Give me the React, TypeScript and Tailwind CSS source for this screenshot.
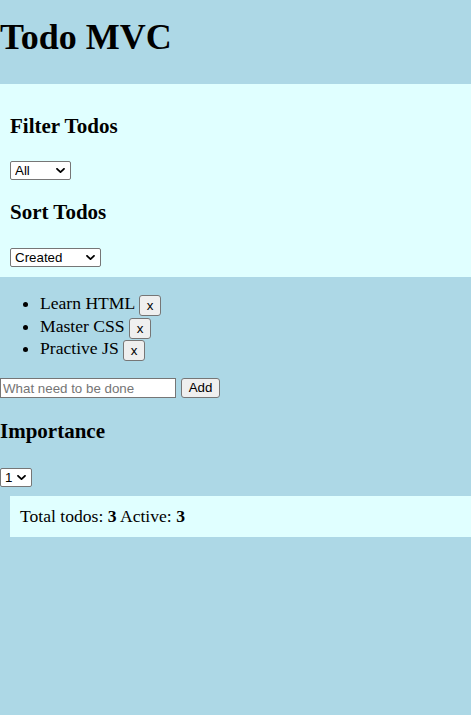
import { useState } from 'react'

type Todo = { id: number; title: string; importance: number; done: boolean }

const initialTodos: Todo[] = [
  { id: 1, title: 'Learn HTML', importance: 1, done: false },
  { id: 2, title: 'Master CSS', importance: 1, done: false },
  { id: 3, title: 'Practive JS', importance: 1, done: false },
]

function Chevron() {
  return (
    <svg
      className="pointer-events-none absolute right-[6px] top-[7px] h-[5px] w-[9px]"
      viewBox="0 0 9 5"
      fill="none"
      stroke="black"
      strokeWidth="1.8"
      strokeLinecap="round"
      strokeLinejoin="round"
    >
      <polyline points="1,0.8 4.5,4.2 8,0.8" />
    </svg>
  )
}

function NativeSelect({
  value,
  onChange,
  options,
  width,
}: {
  value: string
  onChange: (v: string) => void
  options: string[]
  width: string
}) {
  return (
    <div className={`relative inline-block align-top ${width}`}>
      <select
        value={value}
        onChange={(e) => onChange(e.target.value)}
        className="block h-[19px] w-full appearance-none rounded-[2px] border border-[#767676] bg-white py-0 pl-[4px] pr-[18px] font-['Liberation_Sans',Arial,sans-serif] text-[13.33px] leading-[17px] text-black outline-none"
      >
        {options.map((o) => (
          <option key={o} value={o}>
            {o}
          </option>
        ))}
      </select>
      <Chevron />
    </div>
  )
}

export default function App() {
  const [todos, setTodos] = useState<Todo[]>(initialTodos)
  const [filter, setFilter] = useState('All')
  const [sort, setSort] = useState('Created')
  const [text, setText] = useState('')
  const [importance, setImportance] = useState('1')

  const addTodo = () => {
    if (!text.trim()) return
    setTodos([...todos, { id: Date.now(), title: text.trim(), importance: Number(importance), done: false }])
    setText('')
  }

  const activeCount = todos.filter((t) => !t.done).length

  return (
    <div className="min-h-screen bg-[#add8e6] font-['Liberation_Serif','Times_New_Roman',serif] text-[17.6px] leading-[20.2px] text-black">
      <h1 className="pt-[17px] pb-[25.6px] text-[36px] font-bold leading-[41.4px]">Todo MVC</h1>

      {/* filter + sort */}
      <div className="bg-[#e0ffff] p-[10px]">
        <h3 className="my-[20px] text-[21px] font-bold leading-[24.1px]">Filter Todos</h3>
        <div className="h-[22px] pt-[3px]">
          <NativeSelect value={filter} onChange={setFilter} options={['All', 'Active', 'Done']} width="w-[61px]" />
        </div>
        <h3 className="my-[20px] text-[21px] font-bold leading-[24.1px]">Sort Todos</h3>
        <div className="h-[23px] pt-[4px]">
          <NativeSelect value={sort} onChange={setSort} options={['Created', 'Importance']} width="w-[91px]" />
        </div>
      </div>

      <ul className="mt-[16px] mb-[16px] list-disc pl-[40px]">
        {todos.map((todo) => (
          <li key={todo.id} className="h-[22.5px]">
            {todo.title}{' '}
            <button
              onClick={() => setTodos(todos.filter((t) => t.id !== todo.id))}
              className="mt-[2px] inline-block h-[21px] w-[22px] rounded-[3px] border border-[#767676] bg-[#efefef] p-0 align-top font-['Liberation_Sans',Arial,sans-serif] text-[13.33px] leading-[17px] text-black"
            >
              x
            </button>
          </li>
        ))}
      </ul>

      <div className="flex h-[21.6px] items-start gap-[5px] pt-[1.5px]">
        <input
          value={text}
          onChange={(e) => setText(e.target.value)}
          placeholder="What need to be done"
          className="h-[20px] w-[176px] border border-[#767676] bg-white px-[2px] font-['Liberation_Sans',Arial,sans-serif] text-[13.33px] leading-[18px] text-black outline-none placeholder:text-[#757575]"
        />
        <button
          onClick={addTodo}
          className="h-[20px] w-[39px] rounded-[3px] border border-[#767676] bg-[#efefef] p-0 font-['Liberation_Sans',Arial,sans-serif] text-[13.33px] leading-[18px] text-black"
        >
          Add
        </button>
      </div>

      <h3 className="mt-[20.5px] mb-[25.3px] text-[21px] font-bold leading-[24.1px]">Importance</h3>
      <div className="h-[19px]">
        <NativeSelect value={importance} onChange={setImportance} options={['1', '2', '3']} width="w-[32px]" />
      </div>

      <div className="mt-[8.5px] ml-[10px] h-[41px] bg-[#e0ffff] px-[10px] pt-[10px]">
        Total todos: <span className="font-bold">{todos.length}</span> Active:{' '}
        <span className="font-bold">{activeCount}</span>
      </div>
    </div>
  )
}
